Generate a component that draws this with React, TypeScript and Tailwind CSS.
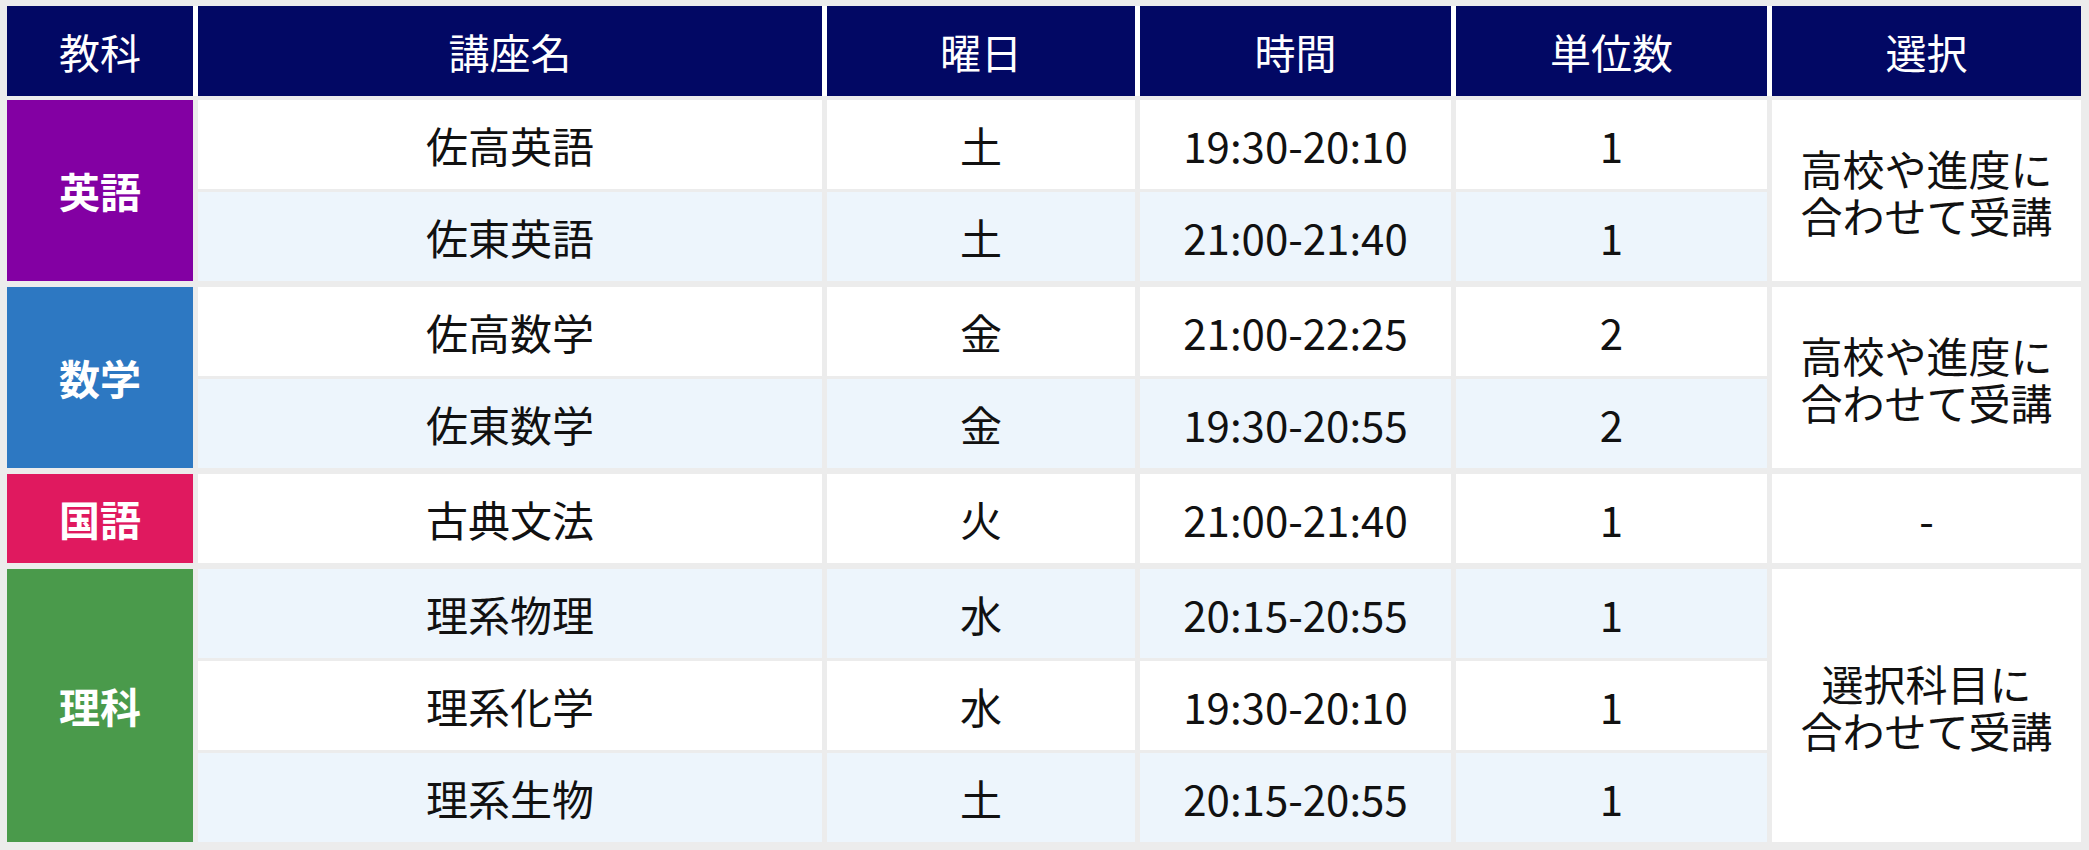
import React from "react";

type Row = { name: string; day: string; time: string; units: string; alt: boolean; pos: string };

const rows: Row[] = [
  { name: "佐高英語", day: "土", time: "19:30-20:10", units: "1", alt: false, pos: "row-start-1 row-end-2" },
  { name: "佐東英語", day: "土", time: "21:00-21:40", units: "1", alt: true, pos: "row-start-2 row-end-3" },
  { name: "佐高数学", day: "金", time: "21:00-22:25", units: "2", alt: false, pos: "row-start-4 row-end-5" },
  { name: "佐東数学", day: "金", time: "19:30-20:55", units: "2", alt: true, pos: "row-start-5 row-end-6" },
  { name: "古典文法", day: "火", time: "21:00-21:40", units: "1", alt: false, pos: "row-start-7 row-end-8" },
  { name: "理系物理", day: "水", time: "20:15-20:55", units: "1", alt: true, pos: "row-start-9 row-end-10" },
  { name: "理系化学", day: "水", time: "19:30-20:10", units: "1", alt: false, pos: "row-start-10 row-end-11" },
  { name: "理系生物", day: "土", time: "20:15-20:55", units: "1", alt: true, pos: "row-start-11 row-end-12" },
];

const subjects = [
  { label: "英語", pos: "row-start-1 row-end-3", bg: "bg-[#8300a3]" },
  { label: "数学", pos: "row-start-4 row-end-6", bg: "bg-[#2d78c2]" },
  { label: "国語", pos: "row-start-7 row-end-8", bg: "bg-[#e0195f]" },
  { label: "理科", pos: "row-start-9 row-end-12", bg: "bg-[#4a9a4b]" },
];

const selects = [
  { lines: ["高校や進度に", "合わせて受講"], pos: "row-start-1 row-end-3" },
  { lines: ["高校や進度に", "合わせて受講"], pos: "row-start-4 row-end-6" },
  { lines: ["-"], pos: "row-start-7 row-end-8" },
  { lines: ["選択科目に", "合わせて受講"], pos: "row-start-9 row-end-12" },
];

const cols = "grid-cols-[186px_624px_308px_311px_311px_309px]";

export default function App() {
  return (
    <div className="w-[2089px] h-[850px] bg-[#ececec] pt-[6px] pl-[7px] font-['Noto_Sans_CJK_JP','Noto_Sans',sans-serif]">
      <div className={`grid ${cols} gap-x-[5px] bg-white w-[2074px] h-[90px]`}>
        {["教科", "講座名", "曜日", "時間", "単位数", "選択"].map((h) => (
          <div
            key={h}
            className="bg-[#020864] text-white text-[41px] leading-none flex items-center justify-center"
          >
            {h}
          </div>
        ))}
      </div>
      <div
        className={`mt-[4px] grid ${cols} gap-x-[5px] gap-y-[3px] grid-rows-[89px_89px_0px_89px_89px_0px_89px_0px_89px_89px_89px] w-[2074px]`}
      >
        {subjects.map((s) => (
          <div
            key={s.label}
            className={`${s.bg} ${s.pos} col-start-1 text-white font-bold text-[41px] leading-none flex items-center justify-center`}
          >
            {s.label}
          </div>
        ))}
        {rows.map((r) => {
          const bg = r.alt ? "bg-[#edf5fc]" : "bg-white";
          const cell = `${bg} ${r.pos} text-[#111] text-[42px] leading-none flex items-center justify-center`;
          return (
            <React.Fragment key={r.name}>
              <div className={`${cell} col-start-2`}>{r.name}</div>
              <div className={`${cell} col-start-3`}>{r.day}</div>
              <div className={`${cell} col-start-4`}>{r.time}</div>
              <div className={`${cell} col-start-5`}>{r.units}</div>
            </React.Fragment>
          );
        })}
        {selects.map((s, i) => (
          <div
            key={i}
            className={`bg-white ${s.pos} col-start-6 text-[#111] text-[42px] leading-[47px] flex flex-col items-center justify-center`}
          >
            {s.lines.map((l) => (
              <span key={l}>{l}</span>
            ))}
          </div>
        ))}
      </div>
    </div>
  );
}
